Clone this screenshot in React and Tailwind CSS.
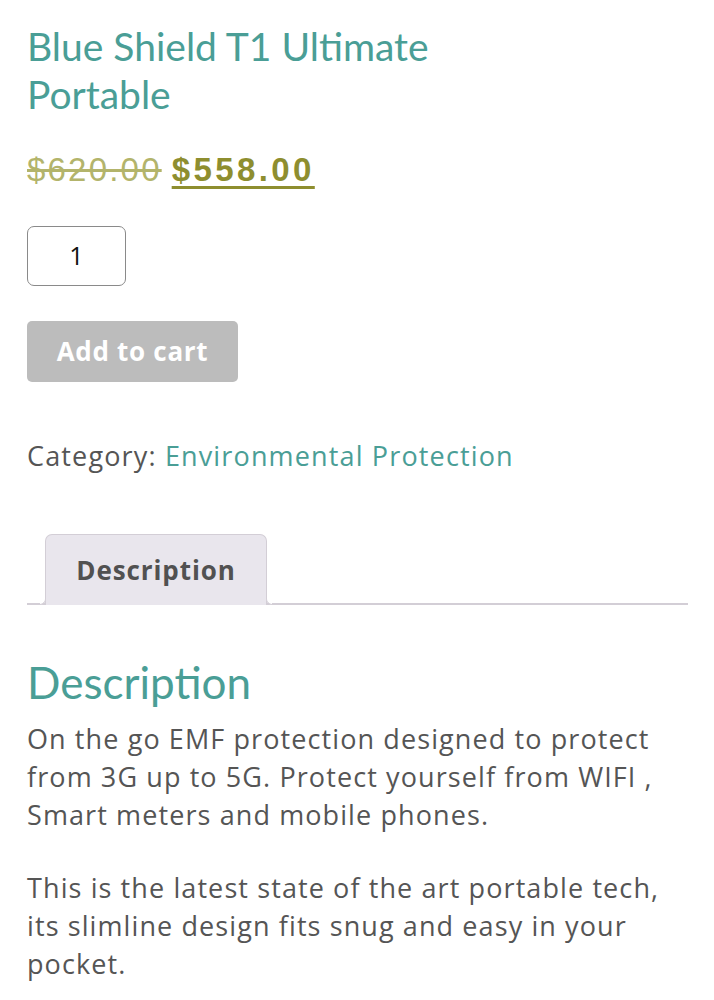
export default function App() {
  const body = { fontFamily: "'Open Sans', 'Noto Sans', sans-serif" };
  const head = { fontFamily: "Lato, 'Noto Sans', sans-serif" };
  return (
    <div className="bg-white min-h-[1000px] px-[27px] pr-[26px] pt-[22px] text-[#555555]" style={body}>
      <h1 className="text-[39px] leading-[48px] text-[#4a9e96] w-[420px]" style={head}>
        Blue Shield T1 Ultimate Portable
      </h1>

      {/* price */}
      <p className="mt-[30px] flex items-baseline gap-[10px] text-[33px] leading-[44px]" style={{ fontFamily: "'Liberation Sans', Arial, sans-serif" }}>
        <del className="text-[#b3b46b] tracking-[2.2px]">$620.00</del>
        <ins className="font-bold text-[#8e8e2f] tracking-[3.4px] underline decoration-[3px] underline-offset-[5px]">$558.00</ins>
      </p>

      {/* qty */}
      <div className="mt-[34px] w-[99px] h-[60px] border border-[#8a8a8a] rounded-[7px] flex items-center justify-center text-[25px] text-[#111]">
        1
      </div>

      <button type="button" className="mt-[35px] w-[211px] h-[61px] bg-[#bcbcbc] rounded-[5px] text-white font-bold text-[26px] tracking-[0.7px]">
        Add to cart
      </button>

      <p className="mt-[56px] text-[27px] leading-[36px] tracking-[1.15px]">
        Category: <a className="text-[#4a9e96]">Environmental Protection</a>
      </p>

      {/* tabs */}
      <div className="mt-[60px] border-b-2 border-[#d3ced6] pl-[18px] flex">
        <div className="relative w-[222px] h-[71px] -mb-[2px] bg-[#e9e6ed] border border-b-0 border-[#d3ced6] rounded-t-[7px] flex items-center justify-center font-bold text-[26px] tracking-[0.9px] text-[#515151]">
          Description
          <span className="absolute -left-[6px] bottom-0 w-[6px] h-[6px] border-r border-b border-[#d3ced6] rounded-br-[6px] bg-white"></span>
          <span className="absolute -right-[6px] bottom-0 w-[6px] h-[6px] border-l border-b border-[#d3ced6] rounded-bl-[6px] bg-white"></span>
        </div>
      </div>

      <h2 className="mt-[50px] text-[44px] leading-[54px] text-[#4a9e96]" style={head}>
        Description
      </h2>
      <p className="mt-[11px] text-[27px] leading-[38px] tracking-[1.1px]">
        On the go EMF protection designed to protect from 3G up to 5G. Protect yourself from WIFI , Smart meters and mobile phones.
      </p>
      <p className="mt-[35px] text-[27px] leading-[38px] tracking-[1.1px]">
        This is the latest state of the art portable tech, its slimline design fits snug and easy in your pocket.
      </p>
    </div>
  );
}
